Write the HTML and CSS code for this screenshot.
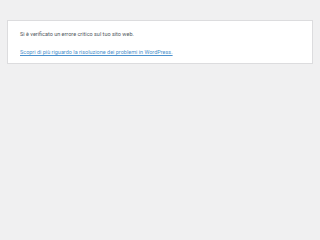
FILE: index.html
```html
<!DOCTYPE html>
<html lang="it">

<head>
  <meta charset="UTF-8">
  <meta name="viewport" content="width=device-width, initial-scale=1.0">
  <title>WordPress › Errore</title>
  <link rel="stylesheet" href="styles.css">
</head>

<body>
  <div class="die-message">
    <p>Si è verificato un errore critico sul tuo sito web.</p>
    <p><a href="#">Scopri di più riguardo la risoluzione dei problemi in WordPress.</a></p>
  </div>
</body>

</html>
```

FILE: styles.css
```css
html {
  background: #f0f0f1;
}

body {
  margin: 20px 7px 0;
  padding: 0 12px;
  background: #fff;
  border: 1px solid #dcdcde;
  color: #50575e;
  font-family: Roboto, "Liberation Sans", sans-serif;
  font-size: 5.5px;
  line-height: 1.5;
}

.die-message {
  padding: 9px 0 6px;
}

p {
  margin: 0 0 10px;
}

p:last-child {
  margin-bottom: 0;
}

a {
  color: #4a90cc;
}
```
